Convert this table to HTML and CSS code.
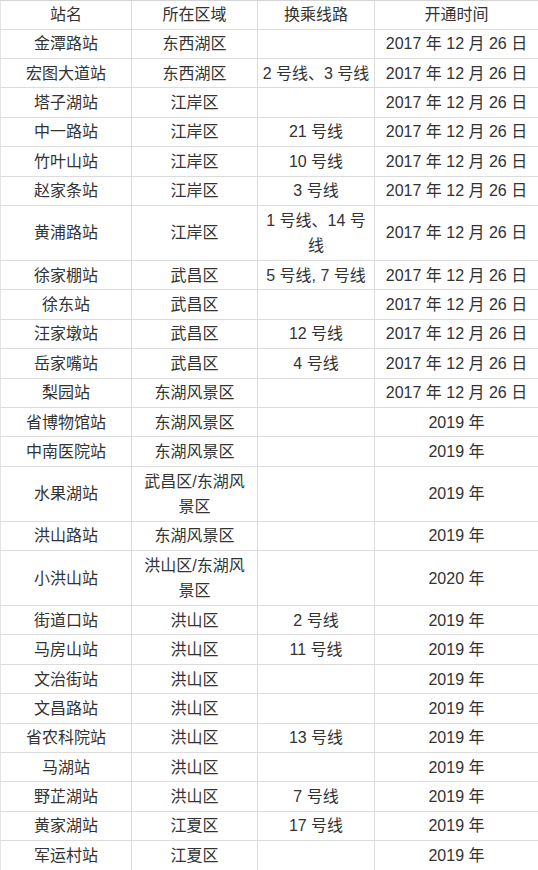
FILE: index.html
```html
<!DOCTYPE html>
<html lang="zh-CN">
<head>
<meta charset="utf-8">
<title>站点表</title>
<link rel="stylesheet" href="styles.css">
</head>
<body>
<div class="table">
  <div class="row head"><div class="c">站名</div><div class="c">所在区域</div><div class="c">换乘线路</div><div class="c">开通时间</div></div>
  <div class="row"><div class="c">金潭路站</div><div class="c">东西湖区</div><div class="c"></div><div class="c">2017 年 12 月 26 日</div></div>
  <div class="row"><div class="c">宏图大道站</div><div class="c">东西湖区</div><div class="c">2 号线、3 号线</div><div class="c">2017 年 12 月 26 日</div></div>
  <div class="row"><div class="c">塔子湖站</div><div class="c">江岸区</div><div class="c"></div><div class="c">2017 年 12 月 26 日</div></div>
  <div class="row"><div class="c">中一路站</div><div class="c">江岸区</div><div class="c">21 号线</div><div class="c">2017 年 12 月 26 日</div></div>
  <div class="row"><div class="c">竹叶山站</div><div class="c">江岸区</div><div class="c">10 号线</div><div class="c">2017 年 12 月 26 日</div></div>
  <div class="row"><div class="c">赵家条站</div><div class="c">江岸区</div><div class="c">3 号线</div><div class="c">2017 年 12 月 26 日</div></div>
  <div class="row tall"><div class="c">黄浦路站</div><div class="c">江岸区</div><div class="c">1 号线、14 号<br>线</div><div class="c">2017 年 12 月 26 日</div></div>
  <div class="row"><div class="c">徐家棚站</div><div class="c">武昌区</div><div class="c">5 号线, 7 号线</div><div class="c">2017 年 12 月 26 日</div></div>
  <div class="row"><div class="c">徐东站</div><div class="c">武昌区</div><div class="c"></div><div class="c">2017 年 12 月 26 日</div></div>
  <div class="row"><div class="c">汪家墩站</div><div class="c">武昌区</div><div class="c">12 号线</div><div class="c">2017 年 12 月 26 日</div></div>
  <div class="row"><div class="c">岳家嘴站</div><div class="c">武昌区</div><div class="c">4 号线</div><div class="c">2017 年 12 月 26 日</div></div>
  <div class="row"><div class="c">梨园站</div><div class="c">东湖风景区</div><div class="c"></div><div class="c">2017 年 12 月 26 日</div></div>
  <div class="row"><div class="c">省博物馆站</div><div class="c">东湖风景区</div><div class="c"></div><div class="c">2019 年</div></div>
  <div class="row"><div class="c">中南医院站</div><div class="c">东湖风景区</div><div class="c"></div><div class="c">2019 年</div></div>
  <div class="row tall"><div class="c">水果湖站</div><div class="c">武昌区/东湖风<br>景区</div><div class="c"></div><div class="c">2019 年</div></div>
  <div class="row"><div class="c">洪山路站</div><div class="c">东湖风景区</div><div class="c"></div><div class="c">2019 年</div></div>
  <div class="row tall"><div class="c">小洪山站</div><div class="c">洪山区/东湖风<br>景区</div><div class="c"></div><div class="c">2020 年</div></div>
  <div class="row"><div class="c">街道口站</div><div class="c">洪山区</div><div class="c">2 号线</div><div class="c">2019 年</div></div>
  <div class="row"><div class="c">马房山站</div><div class="c">洪山区</div><div class="c">11 号线</div><div class="c">2019 年</div></div>
  <div class="row"><div class="c">文治街站</div><div class="c">洪山区</div><div class="c"></div><div class="c">2019 年</div></div>
  <div class="row"><div class="c">文昌路站</div><div class="c">洪山区</div><div class="c"></div><div class="c">2019 年</div></div>
  <div class="row"><div class="c">省农科院站</div><div class="c">洪山区</div><div class="c">13 号线</div><div class="c">2019 年</div></div>
  <div class="row"><div class="c">马湖站</div><div class="c">洪山区</div><div class="c"></div><div class="c">2019 年</div></div>
  <div class="row"><div class="c">野芷湖站</div><div class="c">洪山区</div><div class="c">7 号线</div><div class="c">2019 年</div></div>
  <div class="row"><div class="c">黄家湖站</div><div class="c">江夏区</div><div class="c">17 号线</div><div class="c">2019 年</div></div>
  <div class="row"><div class="c">军运村站</div><div class="c">江夏区</div><div class="c"></div><div class="c">2019 年</div></div>
</div>
</body>
</html>
```

FILE: styles.css
```css
html, body {
  margin: 0;
  padding: 0;
  background: #ffffff;
}

body {
  font-family: "Liberation Sans", "Noto Sans CJK SC", sans-serif;
  font-size: 16px;
  color: #333333;
  overflow: hidden;
}

.table {
  width: 538px;
  display: flex;
  flex-direction: column;
  border-top: 1px solid #d4d4d4;
}

.row {
  display: grid;
  grid-template-columns: 132px 126px 117px 163px;
  height: 29.4px;
  box-sizing: border-box;
  border-bottom: 1px solid #dcdcdc;
}

.row.head {
  height: 28.6px;
}

.row.tall {
  height: 55px;
}

.c {
  display: flex;
  align-items: center;
  justify-content: center;
  text-align: center;
  line-height: 25px;
  padding: 0 4px;
  border-right: 1px solid #dcdcdc;
  white-space: nowrap;
  overflow: hidden;
}

.c:first-child {
  border-left: 1px solid #e4e4e4;
}

.c:last-child {
  border-right: none;
}
```
